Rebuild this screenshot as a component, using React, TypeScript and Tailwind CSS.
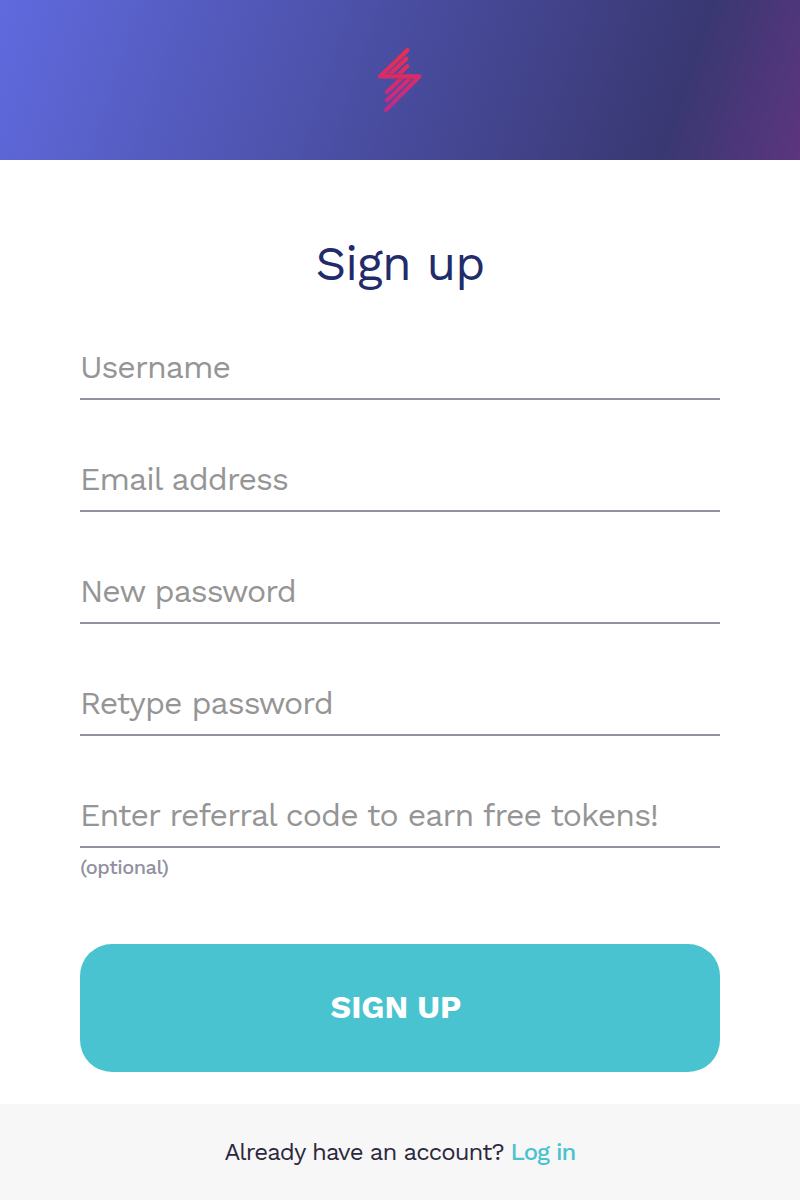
const fields: { label: string; type: string }[] = [
  { label: 'Username', type: 'text' },
  { label: 'Email address', type: 'email' },
  { label: 'New password', type: 'password' },
  { label: 'Retype password', type: 'password' },
  { label: 'Enter referral code to earn free tokens!', type: 'text' },
];

function Logo() {
  return (
    <svg width="48" height="68" viewBox="376 46 48 68" fill="none" strokeWidth="4.2" strokeLinecap="round" strokeLinejoin="round">
      <defs>
        <linearGradient id="bolt" gradientUnits="userSpaceOnUse" x1="0" y1="48" x2="0" y2="112">
          <stop offset="0" stopColor="#f02c4c" />
          <stop offset="1" stopColor="#b92c8f" />
        </linearGradient>
        <clipPath id="upper"><path d="M376 46h48v29h-48z" /></clipPath>
        <clipPath id="lower"><path d="M376 78h48v36h-48z" /></clipPath>
      </defs>
      <g stroke="url(#bolt)">
        <path clipPath="url(#upper)" d="M406.3 58.7L387.5 76.5M407.2 66.3L396.5 76.5" />
        <path clipPath="url(#lower)" d="M387 92L402.8 77M387 100.2L411.3 77" />
        <path d="M407.4 50.2L380 76.4H419.3L386 110" />
      </g>
      <path d="M389 73.9H406M394 79H412" stroke="#a8305f" strokeOpacity="0.7" strokeWidth="1" strokeLinecap="butt" />
    </svg>
  );
}

export default function App() {
  return (
    <main className="flex h-[1200px] w-[800px] flex-col bg-white font-['Work_Sans','Inter','Open_Sans',sans-serif]">
      <header className="flex h-40 shrink-0 items-center justify-center bg-[linear-gradient(108.6deg,#606ade_0%,#393873_83.4%,#5c357e_100%)]">
        <Logo />
      </header>
      <form className="flex flex-1 flex-col px-20 pt-[72px]">
        <h1 className="text-center text-[48px] leading-[64px] tracking-[-0.8px] text-[#232c6a]">Sign up</h1>
        <div className="mt-10 flex flex-col gap-12">
          {fields.map((field) => (
            <input
              key={field.label}
              type={field.type}
              placeholder={field.label}
              aria-label={field.label}
              className="h-16 w-full border-b-2 border-[#9290a1] text-[32px] tracking-[-0.94px] outline-none placeholder:text-[#959595]"
            />
          ))}
        </div>
        <p className="mt-[5px] text-[20px] leading-7 font-medium tracking-[-0.5px] text-[#9290a1]">(optional)</p>
        <button type="button" className="mt-[63px] h-32 w-full rounded-[32px] bg-[#4ac3d1] pr-2 pb-[3px] text-[32px] font-bold text-white">SIGN UP</button>
      </form>
      <footer className="flex h-24 shrink-0 items-center justify-center gap-[7px] bg-[#f7f7f7] text-[24px] tracking-[-0.94px] text-[#2b283d]">
        <span>Already have an account?</span>
        <a href="#" className="font-medium text-[#4ac3d1]">Log in</a>
      </footer>
    </main>
  );
}
